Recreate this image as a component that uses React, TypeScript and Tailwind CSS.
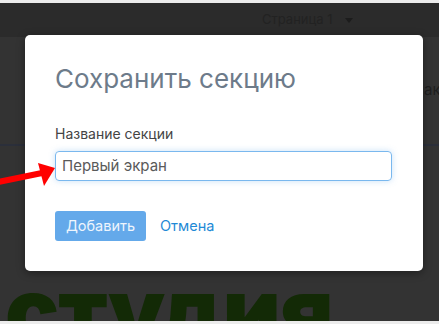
import React from 'react';

const font = { fontFamily: 'Inter, "Noto Sans", sans-serif' };

function Arrow() {
  return (
    <svg className="absolute left-0 top-0 pointer-events-none" width="70" height="200" viewBox="0 0 70 200">
      <line x1="-2" y1="182" x2="42" y2="173" stroke="#ff0000" strokeWidth="6" />
      <polygon points="38,163 55,168 44,186" fill="#ff0000" />
    </svg>
  );
}

export default function App() {
  return (
    <div className="relative w-[439px] h-[324px] overflow-hidden bg-[#333333] flex flex-col" style={font}>
      <div className="h-[3px] bg-[#ececec] shrink-0" />
      <div className="h-[34px] bg-[#2b2b2b] shrink-0 flex items-center pl-[262px] gap-[12px] text-[13px] text-[#222222]">
        <span>Страница 1</span>
        <span className="w-0 h-0 border-l-[4px] border-r-[4px] border-t-[5px] border-l-transparent border-r-transparent border-t-[#1c1c1c]" />
      </div>
      <div className="flex-1 relative overflow-hidden">
        <div className="pl-[424px] pt-[45px] text-[15px] text-[#1e1e1e] leading-none whitespace-nowrap">ак</div>
        <div className="mt-[47px] h-[2px] bg-[#2b2f3a]" />
        <div className="pl-[5px] mt-[120px] text-[90px] font-black leading-none text-[#132a06] tracking-[-1px]">студия</div>
      </div>
      <div className="h-[3px] bg-[#ececec] shrink-0" />

      <div className="absolute left-[25px] top-[35px] w-[398px] h-[236px] bg-white rounded-[5px] shadow-[0_2px_8px_rgba(0,0,0,0.4)] px-[30px] pt-[29px]">
        <h2 className="text-[26px] leading-[30px] text-[#6d7b8a] font-normal">Сохранить секцию</h2>
        <div className="mt-[31px] text-[14px] leading-[18px] text-[#444444]">Название секции</div>
        <div className="mt-[8px] w-[337px] h-[30px] rounded-[4px] border border-[#7ab8ee] shadow-[0_0_6px_rgba(100,170,235,0.35)] flex items-center px-[6px] text-[15px] text-[#5a5a5a]">
          Первый экран
        </div>
        <div className="mt-[30px] flex items-center gap-[14px]">
          <div className="w-[91px] h-[30px] rounded-[3px] bg-[#64a9ea] text-[#eef5fd] text-[14.5px] flex items-center justify-center">Добавить</div>
          <span className="text-[14.5px] text-[#1f8ad6]">Отмена</span>
        </div>
      </div>
      <Arrow />
    </div>
  );
}
